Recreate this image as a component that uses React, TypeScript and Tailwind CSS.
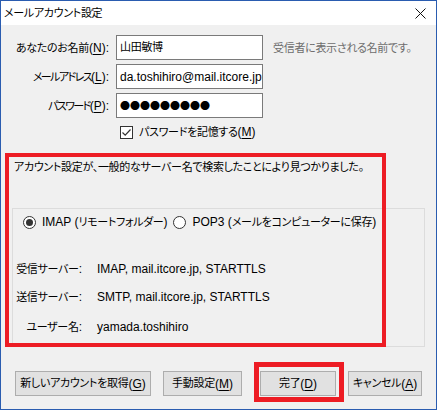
import React from "react";

const font = {
  fontFamily: '"Liberation Sans", "Noto Sans CJK JP", sans-serif',
};

// Japanese runs: CJK font, a touch smaller and proportional
function J({ children, tight }: { children: React.ReactNode; tight?: boolean }) {
  return (
    <span
      className={
        tight
          ? "text-[11px] tracking-[-1.6px] [font-feature-settings:'palt']"
          : "text-[11px] tracking-[-0.3px] [font-feature-settings:'palt']"
      }
    >
      {children}
    </span>
  );
}

function Acc({ pre, k, tight }: { pre: string; k: string; tight?: boolean }) {
  return (
    <>
      <J tight={tight}>{pre}</J>(<u className="underline-offset-2">{k}</u>)
    </>
  );
}

function Field({ children }: { children: React.ReactNode }) {
  return (
    <div className="h-[25px] w-[147px] bg-white border border-[#7a7a7a] flex items-center pl-[3px] overflow-hidden whitespace-nowrap">
      {children}
    </div>
  );
}

function Button({ children, w }: { children: React.ReactNode; w: string }) {
  return (
    <div className={`h-[25px] ${w} bg-[#e1e1e1] border border-[#adadad] flex items-center justify-center whitespace-nowrap`}>
      {children}
    </div>
  );
}

function Radio({ checked }: { checked?: boolean }) {
  return (
    <span className="w-[13px] h-[13px] shrink-0 rounded-full border border-[#333] bg-white flex items-center justify-center">
      {checked && <span className="w-[7px] h-[7px] rounded-full bg-[#333]" />}
    </span>
  );
}

function InfoRow({ label, value, mt }: { label: string; value: string; mt: string }) {
  return (
    <div className={`${mt} h-[18px] flex items-center whitespace-nowrap`}>
      <span className="w-[69px] text-right">
        <J>{label}</J>:
      </span>
      <span className="ml-[15px]">{value}</span>
    </div>
  );
}

export default function App() {
  return (
    <div
      className="w-[437px] h-[410px] border border-[#2a5cb0] flex flex-col text-[12px] text-black"
      style={font}
    >
      {/* title bar */}
      <div className="h-[24px] bg-white flex items-center justify-between pl-[3px] pr-[10px] shrink-0">
        <J>メールアカウント設定</J>
        <svg width="11" height="11" viewBox="0 0 11 11">
          <path d="M0.5 0.5 L10.5 10.5 M10.5 0.5 L0.5 10.5" stroke="#111" strokeWidth="1" />
        </svg>
      </div>

      <div className="relative flex-1 bg-[#f0f0f0] flex flex-col pt-[10px]">
        {/* form */}
        <div className="grid grid-cols-[108px_147px_auto] gap-y-[4px] items-center">
          <div className="text-right whitespace-nowrap">
            <Acc pre="あなたのお名前" k="N" />:
          </div>
          <div className="ml-[7px]">
            <Field>
              <J>山田敏博</J>
            </Field>
          </div>
          <div className="ml-[17px] text-[#6d6d6d] whitespace-nowrap">
            <J>受信者に表示される名前です。</J>
          </div>

          <div className="text-right whitespace-nowrap">
            <Acc pre="メールアドレス" k="L" tight />:
          </div>
          <div className="ml-[7px]">
            <Field>da.toshihiro@mail.itcore.jp</Field>
          </div>
          <div />

          <div className="text-right whitespace-nowrap">
            <Acc pre="パスワード" k="P" tight />:
          </div>
          <div className="ml-[7px]">
            <Field>
              <span
                className="text-[10px] tracking-[0px] leading-none"
                style={{ fontFamily: '"Noto Sans CJK JP", sans-serif' }}
              >
                ●●●●●●●●●
              </span>
            </Field>
          </div>
          <div />
        </div>

        <div className="mt-[6px] h-[16px] flex items-center pl-[119px] gap-[6px]">
          <svg width="13" height="13" viewBox="0 0 13 13">
            <rect x="0.5" y="0.5" width="12" height="12" fill="#fff" stroke="#333" />
            <path d="M2.5 6.5 L5.2 9.2 L10.5 3.5" fill="none" stroke="#333" strokeWidth="1.2" />
          </svg>
          <span className="whitespace-nowrap">
            <Acc pre="パスワードを記憶する" k="M" />
          </span>
        </div>

        <div className="mt-[18px] h-[18px] leading-[18px] pl-[13px] whitespace-nowrap">
          <J>アカウント設定が、一般的なサーバー名で検索したことにより見つかりました。</J>
        </div>

        {/* group box */}
        <div className="mt-[32px] ml-[11px] w-[413px] h-[139px] border border-[#dcdcdc] flex flex-col">
          <div className="mt-[4px] h-[18px] flex items-center pl-[10px] whitespace-nowrap">
            <Radio checked />
            <span className="ml-[6px]">
              IMAP (<J>リモートフォルダー</J>)
            </span>
            <span className="ml-[6px]">
              <Radio />
            </span>
            <span className="ml-[6px]">
              POP3 (<J>メールをコンピューターに保存</J>)
            </span>
          </div>

          <InfoRow mt="mt-[29px]" label="受信サーバー" value="IMAP, mail.itcore.jp, STARTTLS" />
          <InfoRow mt="mt-[10px]" label="送信サーバー" value="SMTP, mail.itcore.jp, STARTTLS" />
          <InfoRow mt="mt-[12px]" label="ユーザー名" value="yamada.toshihiro" />
        </div>

        {/* buttons */}
        <div className="mt-[24px] flex items-center pl-[14px]">
          <Button w="w-[136px]">
            <Acc pre="新しいアカウントを取得" k="G" />
          </Button>
          <div className="ml-[12px]">
            <Button w="w-[79px]">
              <Acc pre="手動設定" k="M" />
            </Button>
          </div>
          <div className="ml-[18px]">
            <Button w="w-[76px]">
              <Acc pre="完了" k="D" />
            </Button>
          </div>
          <div className="ml-[12px]">
            <Button w="w-[74px]">
              <Acc pre="キャンセル" k="A" />
            </Button>
          </div>
        </div>

        {/* red annotation boxes */}
        <div className="absolute left-[4px] top-[128px] w-[381px] h-[194px] border-[4px] border-[#ed1c24] pointer-events-none" />
        <div className="absolute left-[253px] top-[337px] w-[90px] h-[40px] border-[5px] border-[#ed1c24] pointer-events-none" />
      </div>
    </div>
  );
}
